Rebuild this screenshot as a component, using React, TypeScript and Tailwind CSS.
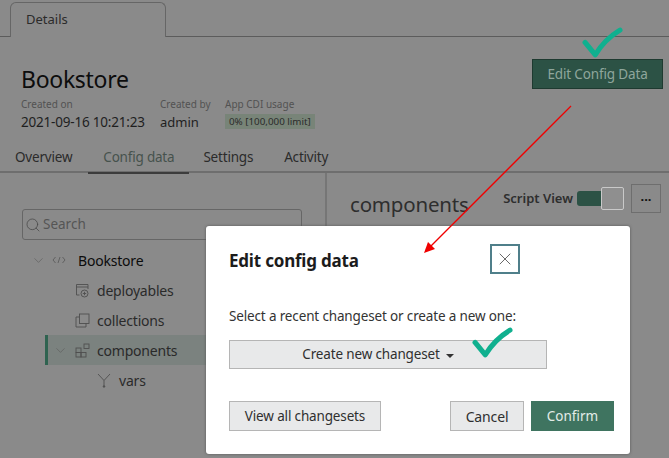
import { ChevronDown, Search, X } from "lucide-react"

const font = "[font-family:'Noto_Sans',sans-serif]"

function TreeRow({ label, indent, icon, chevron, active, dark, chevronPad }: { label: string; indent: string; icon: React.ReactNode; chevron?: boolean; active?: boolean; dark?: boolean; chevronPad?: string }) {
  return (
    <div className={`flex h-[30px] items-center ${active ? "border-l-[3px] border-[#2f6350] bg-[#7b827f]" : "border-l-[3px] border-transparent"}`}>
      <div className={`w-[27px] ${chevronPad ?? "pl-[6px]"}`}>{chevron && <ChevronDown className="h-[15px] w-[15px] text-[#5c5c5c]" strokeWidth={1} />}</div>
      <div className={indent}>{icon}</div>
      <span className={`text-[14px] tracking-[-0.2px] ${dark ? "text-[#0c0c0c]" : "text-[#2a2a2a]"}`}>{label}</span>
    </div>
  )
}

function Tick({ className }: { className: string }) {
  return (
    <svg className={className} viewBox="0 0 40 32" fill="none">
      <path d="M3 15 L13 27 C19 17 27 9 37 3" stroke="#10b08f" strokeWidth="5" strokeLinecap="round" strokeLinejoin="round" />
    </svg>
  )
}

export default function App() {
  return (
    <div className={`relative h-[458px] w-[669px] overflow-hidden bg-[#8a8a8a] ${font}`}>
      {/* tabs strip */}
      <div className="flex h-[37px] items-end border-b border-[#5c5c5c] pl-[10px]">
        <div className="-mb-px flex h-[35px] w-[156px] items-center rounded-t-[6px] border border-b-0 border-[#666] bg-[#8a8a8a] pl-[15px] text-[13px] text-[#2b2b2b]">
          Details
        </div>
      </div>

      {/* header */}
      <div className="flex items-start justify-between pl-[21px] pr-[6px]">
        <div>
          <h1 className="mt-[26px] text-[23px] leading-[32px] tracking-[-0.3px] text-[#0d0d0d]">Bookstore</h1>
          <div className="mt-[2px] flex">
            <div className="w-[139px]">
              <div className="text-[10px] leading-[14px] text-[#525252]">Created on</div>
              <div className="mt-[2px] text-[13.5px] leading-[18px] tracking-[-0.2px] text-[#1f1f1f]">2021-09-16 10:21:23</div>
            </div>
            <div className="w-[65px]">
              <div className="text-[10px] leading-[14px] text-[#525252]">Created by</div>
              <div className="mt-[2px] text-[13px] leading-[18px] text-[#1f1f1f]">admin</div>
            </div>
            <div>
              <div className="text-[10px] leading-[14px] text-[#525252]">App CDI usage</div>
              <div className="mt-[3px] bg-[#788478] px-[4px] text-[9.8px] leading-[15px] text-[#2b2b2b]">0% [100,000 limit]</div>
            </div>
          </div>
        </div>
        <button className="mt-[22px] h-[30px] w-[131px] border border-[#1e3a30] bg-[#2c5245] text-[13.5px] tracking-[-0.15px] text-[#8fa69c]">
          Edit Config Data
        </button>
      </div>

      {/* nav */}
      <div className="mt-[8px] flex h-[34px] items-center border-b-2 border-[#6e6e6e] pl-[15px] pt-[4px] text-[13.5px] tracking-[-0.2px] text-[#2b2b2b]">
        <span>Overview</span>
        <span className="relative ml-[31px] text-[#46524d]">
          Config data
          <span className="absolute -bottom-[7px] -left-[15px] -right-[15px] h-[2px] bg-[#3c3c3c]" />
        </span>
        <span className="ml-[29px]">Settings</span>
        <span className="ml-[31px]">Activity</span>
      </div>

      {/* body */}
      <div className="flex">
        <div className="w-[327px] border-r-2 border-[#767676]">
          <div className="ml-[22px] mr-[23px] mt-[36px] flex h-[31px] items-center rounded-[3px] border border-[#666] pl-[2px]">
            <Search className="h-[16px] w-[16px] text-[#4a4a4a]" strokeWidth={1.2} />
            <span className="ml-[2px] text-[13.5px] text-[#555]">Search</span>
          </div>
          <div className="mt-[5px] pl-[45px]">
            <div className="-ml-[23px]">
              <TreeRow
                label="Bookstore"
                indent="w-[26px]"
                chevron
                dark
                icon={
                  <svg width="14" height="10" viewBox="0 0 14 10" fill="none" stroke="#5c5c5c" strokeWidth="0.9">
                    <path d="M3.5 2 L1 5 L3.5 8 M10.5 2 L13 5 L10.5 8 M8 2 L6 8" />
                  </svg>
                }
              />
            </div>
            <TreeRow
              label="deployables"
              indent="w-[22px]"
              icon={
                <svg width="15" height="15" viewBox="0 0 15 15" fill="none" stroke="#4f4f4f" strokeWidth="0.9">
                  <path d="M4.5 12 H1.5 V1.5 H13 V6 M1.5 4 H13" />
                  <circle cx="9.5" cy="10.5" r="3.5" />
                  <path d="M9.5 8.8 V12.2 M7.8 10.5 H11.2" />
                </svg>
              }
            />
            <TreeRow
              label="collections"
              indent="w-[22px]"
              icon={
                <svg width="15" height="15" viewBox="0 0 15 15" fill="none" stroke="#4f4f4f" strokeWidth="0.9">
                  <rect x="4.5" y="1" width="9.5" height="9.5" />
                  <path d="M4.5 4 H1 V14 H11 V10.5" />
                </svg>
              }
            />
            <div className="w-full">
              <TreeRow
                label="components"
                indent="w-[22px]"
                chevron
                chevronPad="pl-[5px]"
                active
                icon={
                  <svg width="15" height="15" viewBox="0 0 15 15" fill="none" stroke="#4f4f4f" strokeWidth="0.9">
                    <rect x="1" y="5" width="5" height="4.5" />
                    <rect x="1" y="9.5" width="5" height="4.5" />
                    <rect x="6" y="9.5" width="5" height="4.5" />
                    <rect x="9" y="1" width="5" height="4.5" />
                  </svg>
                }
              />
            </div>
            <div className="flex h-[30px] items-center pl-[52px]">
              <svg width="14" height="15" viewBox="0 0 14 15" fill="none" stroke="#4f4f4f" strokeWidth="0.9" className="mr-[8px]">
                <path d="M1 1 L7 7.5 L13 1 M7 7.5 V13" />
                <circle cx="7" cy="13.5" r="0.8" fill="#4f4f4f" />
              </svg>
              <span className="text-[14px] tracking-[-0.2px] text-[#2a2a2a]">vars</span>
            </div>
          </div>
        </div>
        <div className="flex flex-1 items-start pl-[23px] pr-[8px]">
          <h2 className="mt-[16px] text-[20.5px] leading-[30px] tracking-[-0.2px] text-[#2e2e2e]">components</h2>
          <div className="ml-auto mt-[11px] flex items-center">
            <span className="mt-[1px] text-[13px] font-semibold text-[#2e2e2e]">Script View</span>
            <div className="ml-[4px] flex items-center">
              <div className="h-[15px] w-[24px] rounded-l-[3px] bg-[#2c5245]" />
              <div className="h-[23px] w-[23px] rounded-[2px] border border-[#c9c9c9] bg-[#8f8f8f]" />
            </div>
            <button className="ml-[7px] flex h-[29px] w-[30px] items-center justify-center border border-[#6e6e6e] bg-[#8a8a8a] text-[13px] font-bold leading-none text-[#111]">
              <span className="-mt-[5px]">...</span>
            </button>
          </div>
        </div>
      </div>

      {/* modal */}
      <div className="absolute left-[206px] top-[226px] h-[228px] w-[424px] rounded-[3px] bg-white px-[23px] shadow-[0_0_3px_#555]">
        <div className="flex h-[47px] items-start justify-between pr-[87px] pt-[18px]">
          <h3 className="text-[17px] font-bold leading-[34px] tracking-[-0.2px] text-[#1c1c1c]">Edit config data</h3>
          <button className="flex h-[30px] w-[30px] items-center justify-center border-2 border-[#4f7f8a]">
            <X className="h-[20px] w-[20px] text-[#4a4a4a]" strokeWidth={1} />
          </button>
        </div>
        <p className="mt-[33px] text-[13.5px] leading-[20px] tracking-[-0.15px] text-[#333]">Select a recent changeset or create a new one:</p>
        <button className="mt-[14px] flex h-[29px] w-[318px] items-center justify-center border border-[#b5b5b5] bg-[#e8e9ea] pr-[20px] text-[13.5px] tracking-[-0.15px] text-[#2f2f2f]">
          Create new changeset
          <span className="ml-[6px] mt-[2px] h-0 w-0 border-x-[4px] border-t-[4px] border-x-transparent border-t-[#333]" />
        </button>
        <div className="mt-[32px] flex">
          <button className="h-[30px] w-[152px] border border-[#b5b5b5] bg-[#e8e9ea] text-[13.5px] tracking-[-0.15px] text-[#2f2f2f]">View all changesets</button>
          <button className="ml-auto h-[30px] w-[74px] border border-[#b5b5b5] bg-[#e8e9ea] text-[14px] tracking-[-0.15px] text-[#2f2f2f]">Cancel</button>
          <button className="-mr-[7px] ml-[7px] h-[30px] w-[83px] bg-[#3f7460] text-[13.5px] text-[#e3ece8]">Confirm</button>
        </div>
      </div>

      {/* annotations drawn on top of the screenshot */}
      <svg className="absolute left-0 top-0 h-[458px] w-[669px]" viewBox="0 0 669 458" fill="none">
        <path d="M571 106 L430 247" stroke="#f00000" strokeWidth="1.3" />
        <path d="M424 253 L435 249 L428 242 Z" fill="#f00000" />
      </svg>
      <Tick className="absolute left-[582px] top-[27px] h-[33px] w-[41px]" />
      <Tick className="absolute left-[472px] top-[327px] h-[33px] w-[41px]" />
    </div>
  )
}
